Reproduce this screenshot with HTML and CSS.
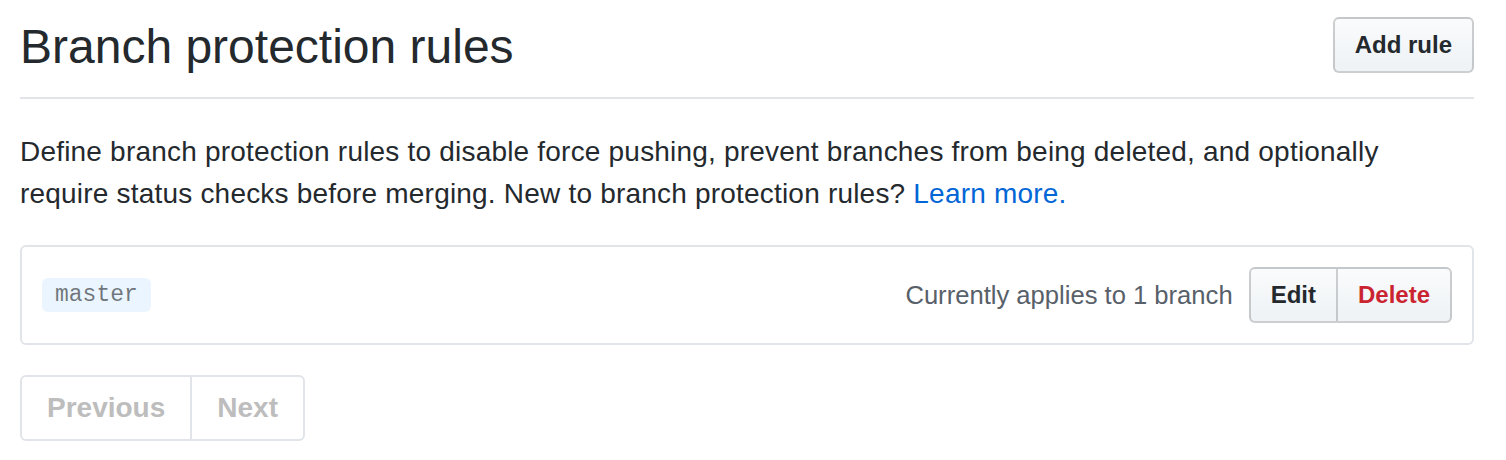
FILE: index.html
```html
<!DOCTYPE html>
<html lang="en">
<head>
<meta charset="utf-8">
<title>Branch protection rules</title>
<link rel="stylesheet" href="styles.css">
</head>
<body>
<div class="page">
  <div class="subhead">
    <h2 class="subhead-heading">Branch protection rules</h2>
    <button class="btn btn-add">Add rule</button>
  </div>
  <p class="description">Define branch protection rules to disable force pushing, prevent branches from being deleted, and optionally require status checks before merging. New to branch protection rules? <a href="#" class="link">Learn more.</a></p>
  <div class="rule-box">
    <span class="branch-name">master</span>
    <div class="rule-actions">
      <span class="applies">Currently applies to 1 branch</span>
      <div class="btn-group">
        <button class="btn btn-group-item">Edit</button>
        <button class="btn btn-group-item btn-danger">Delete</button>
      </div>
    </div>
  </div>
  <div class="pagination">
    <span class="page-item">Previous</span>
    <span class="page-item">Next</span>
  </div>
</div>
</body>
</html>
```
FILE: styles.css
```css
* { box-sizing: border-box; }
html, body { margin: 0; padding: 0; background: #fff; }
body {
  font-family: "Liberation Sans", Arial, sans-serif;
  color: #24292e;
}
.page {
  padding: 0 32px 0 20px;
}
.subhead {
  display: flex;
  justify-content: space-between;
  align-items: flex-start;
  padding-top: 11px;
  padding-bottom: 14px;
  border-bottom: 2px solid #e1e4e8;
}
.subhead-heading {
  margin: 0;
  font-size: 48px;
  line-height: 72px;
  font-weight: normal;
  color: #24292e;
}
.btn {
  font-family: "Liberation Sans", Arial, sans-serif;
  font-size: 24px;
  font-weight: bold;
  line-height: 40px;
  padding: 6px 20px;
  color: #24292e;
  border: 2px solid rgba(27, 31, 35, 0.2);
  border-radius: 6px;
  background: linear-gradient(-180deg, #fafbfc 0%, #eff3f6 90%);
  cursor: pointer;
  white-space: nowrap;
}
.btn-add {
  margin-top: 6px;
}
.description {
  margin: 32px 0 0;
  font-size: 28px;
  line-height: 42px;
  letter-spacing: 0.2px;
  color: #24292e;
}
.link {
  color: #0366d6;
  text-decoration: none;
}
.rule-box {
  margin-top: 30px;
  border: 2px solid #e1e4e8;
  border-radius: 6px;
  padding: 20px;
  display: flex;
  justify-content: space-between;
  align-items: center;
}
.branch-name {
  font-family: "Liberation Mono", "Courier New", monospace;
  font-size: 23px;
  line-height: 26px;
  padding: 4px 13px;
  color: rgba(27, 31, 35, 0.6);
  background: #eaf5ff;
  border-radius: 6px;
}
.rule-actions {
  display: flex;
  align-items: center;
}
.applies {
  font-size: 25.6px;
  line-height: 40px;
  color: #586069;
  margin-right: 16px;
}
.btn-group {
  display: flex;
}
.btn-group-item:first-child {
  border-top-right-radius: 0;
  border-bottom-right-radius: 0;
}
.btn-group-item + .btn-group-item {
  border-left-width: 0;
  border-top-left-radius: 0;
  border-bottom-left-radius: 0;
}
.btn-danger {
  color: #cb2431;
}
.pagination {
  margin-top: 30px;
  display: inline-flex;
}
.page-item {
  font-size: 28px;
  font-weight: bold;
  line-height: 40px;
  padding: 11px 25px;
  color: #bdbdbd;
  border: 2px solid #e1e4e8;
}
.page-item:first-child {
  border-radius: 6px 0 0 6px;
}
.page-item + .page-item {
  border-left-width: 0;
  border-radius: 0 6px 6px 0;
}
```
